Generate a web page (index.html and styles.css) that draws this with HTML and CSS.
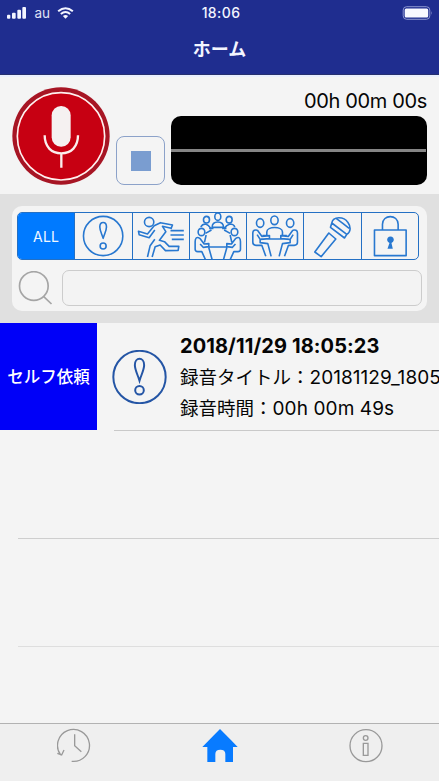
FILE: index.html
```html
<!DOCTYPE html>
<html lang="ja">
<head>
<meta charset="utf-8">
<meta name="viewport" content="width=device-width">
<title>ホーム</title>
<link rel="stylesheet" href="styles.css">
</head>
<body>
<div class="app">
  <header class="header">
    <div class="status">
      <div class="carrier">
        <svg class="signal" viewBox="0 0 57 36"><rect x="0" y="23" width="10" height="12" rx="3"/><rect x="15" y="17" width="11" height="18" rx="3"/><rect x="31" y="8" width="11" height="27" rx="3"/><rect x="46" y="0" width="11" height="35" rx="3"/></svg>
        <span class="carrier-name">au</span>
        <svg class="wifi" viewBox="0 0 50 36"><path d="M3 13Q25-6 47 13M11 21Q25 9 39 21" fill="none" stroke="#f3f5ff" stroke-width="6"/><path d="M25 35l-8-8q8-6 16 0z"/></svg>
      </div>
      <time class="clock">18:06</time>
      <svg class="battery" viewBox="0 0 30 14"><rect x=".7" y=".7" width="26.6" height="12.6" rx="3.4"/><rect class="charge" x="2.2" y="2.4" width="23.5" height="9.2" rx="1.5"/><path class="charge-tip" d="M28.8 5q1.4 2 0 4z"/></svg>
    </div>
    <h1 class="title">ホーム</h1>
  </header>

  <section class="recorder">
    <svg class="record" viewBox="35 35 294 294">
      <circle cx="182" cy="182" r="146" fill="#a71524"/>
      <circle cx="182" cy="183" r="131" fill="#c70012" stroke="#fff0ef" stroke-width="5"/>
      <rect x="154" y="92" width="57" height="122" rx="28" fill="#f5f1f1"/>
      <path d="M133 180c0 34 20 54 50 54s50-20 50-54M183 234v43" fill="none" stroke="#fbeeee" stroke-width="7"/>
    </svg>
    <div class="stop"><span class="stop-mark"></span></div>
    <div class="monitor">
      <div class="timer">00h 00m 00s</div>
      <div class="wave"><div class="wave-line"></div></div>
    </div>
  </section>

  <section class="filter">
    <div class="panel">
      <div class="segments">
        <div class="segment active">ALL</div>
        <div class="segment"><svg viewBox="226 54 168 138"><circle cx="310" cy="123" r="59"/><path d="M310 130c-4-13-10-23-10-34 0-18 20-18 20 0 0 11-6 21-10 34z"/><circle cx="310" cy="153" r="9"/></svg></div>
        <div class="segment"><svg viewBox="9 9 168 138"><circle cx="57" cy="36" r="14"/><path d="M74 60L57 83 27 74 25 64 52 72 72 47 91 38 127 45 123 55 97 49 107 65 88 91 103 95 117 109H146L144 121 106 122 90 105 75 110 66 141M52 141L60 107 74 88M121 62h40M121 75h40M125 88h36"/></svg></div>
        <div class="segment"><svg viewBox="14 24 168 138"><g><ellipse cx="97" cy="35" rx="9" ry="11"/><ellipse cx="63" cy="44" rx="9" ry="10"/><ellipse cx="131" cy="44" rx="9" ry="10"/><ellipse cx="48" cy="81" rx="10" ry="11"/><ellipse cx="147" cy="81" rx="10" ry="11"/><path d="M46 66q4-9 15-9l8 5 7 8M148 66q-3-9-15-9l-9 5-8 8M80 67q0-16 17-16t17 16zM71 70h13M110 70h13M78 75l-18 10M116 75l18 10M57 126h81M43 100c-10-6-14 0-14 10v23q0 7 8 7h12l11 24M43 100l13 17 14-1v9l-17 2-9-10M70 128l10 36M151 100c10-6 14 0 14 10v23q0 7-8 7h-12l-11 24M151 100l-13 17-14-1v9l17 2 9-10M124 128l-10 36M62 90l-5 22M134 90l5 22"/></g></svg></div>
        <div class="segment"><svg viewBox="82 54 168 138"><ellipse cx="121" cy="84" rx="11" ry="13"/><ellipse cx="164" cy="76" rx="11" ry="13"/><ellipse cx="211" cy="84" rx="11" ry="13"/><path d="M141 122v-11c0-18 47-18 47 0v11M141 122h-13M188 122h13M124 132h82M113 106c-7-3-14 0-14 8v28q0 9 10 9h17l12 33M113 106l13 18 23-2v9l-28 2-9-14M121 133v10l23 3 10 38M219 106c7-3 14 0 14 8v28q0 9-10 9h-17l-12 33M219 106l-13 18-23-2v9l28 2 9-14M211 133v10l-23 3-10 38"/></svg></div>
        <div class="segment"><svg viewBox="254 54 168 138"><path d="M337 84c4-21 36-20 48-2 10 14 9 29-3 36zM337 84l-4 13 42 32 7-11M351 71q19 14 38 29M328 114l21 18-44 53-19-14z"/></svg></div>
        <div class="segment"><svg viewBox="427 54 168 138"><path d="M464 105h95v77h-95zM488 105V88c0-31 47-31 47 0v17"/><path class="keyhole" d="M503 161l6-17a10 10 0 1 1 6 0l4 17z"/></svg></div>
      </div>
      <div class="search">
        <svg class="search-icon" viewBox="0 0 104 102"><circle cx="47" cy="45" r="43"/><path d="M76 76l24 23"/></svg>
        <input class="search-box" type="text">
      </div>
    </div>
  </section>

  <main class="list">
    <article class="item">
      <div class="tag">セルフ依頼</div>
      <div class="item-body">
        <svg class="item-icon" viewBox="0 0 166 162"><circle cx="83" cy="81" r="79"/><path d="M83 92c-5-17-14-32-14-47 0-25 28-25 28 0 0 15-9 30-14 47z"/><circle cx="83" cy="121" r="13"/></svg>
        <div class="details">
          <div class="date">2018/11/29 18:05:23</div>
          <div class="line name">録音タイトル：<span class="digits">20181129_1805</span></div>
          <div class="line">録音時間：<span class="duration">00h 00m 49s</span></div>
        </div>
      </div>
    </article>
    <div class="empty"></div>
    <div class="empty second"></div>
  </main>

  <nav class="tabs">
    <div class="tab"><svg class="tab-icon" viewBox="170 84 108 108"><path d="M181 165A48 48 0 1 1 214 184M171 160l13 5 7-15M223 103v34l20 18"/></svg></div>
    <div class="tab"><svg class="tab-icon home" viewBox="3 0 108 108"><path d="M54 3L89 38 107 57H93v45H70V78q0-13-15-13T40 78v24H16V57H1L34 23z"/></svg></div>
    <div class="tab"><svg class="tab-icon" viewBox="385 84 108 108"><circle cx="439" cy="137" r="48"/><circle cx="438" cy="114" r="7"/><path d="M431 130h14v36h-14z"/></svg></div>
  </nav>
</div>
</body>
</html>
```
FILE: styles.css
```css
* { box-sizing: border-box; }
body { margin: 0; background: #f4f4f4; color: #050505; font-family: Inter, "Noto Sans CJK JP", sans-serif; }
svg { display: block; }
.app { width: 439px; height: 781px; display: flex; flex-direction: column; overflow: hidden; }

.header { height: 75px; background: #1f2d8f; color: #f3f5ff; border-bottom: 1px solid #26306f; flex: none; }
.status { height: 25px; display: grid; grid-template-columns: 1fr auto 1fr; align-items: center; padding: 0 6px 0 7px; }
.carrier { display: flex; align-items: center; }
.signal { width: 19px; height: 12px; fill: #f3f5ff; }
.carrier-name { font-size: 13.5px; margin: 0 7px 0 8.5px; line-height: 24px; opacity: .9; }
.wifi { width: 17px; height: 12px; fill: #f3f5ff; }
.clock { font-size: 14px; font-weight: 500; letter-spacing: .4px; padding-left: 2px; }
.battery { width: 31px; height: 14px; justify-self: end; fill: none; stroke: #8c95cf; }
.battery .charge { fill: #f8f9ff; stroke: none; }
.battery .charge-tip { fill: #8c95cf; stroke: none; }
.title { margin: 0; text-align: center; font-size: 18px; line-height: 49px; font-weight: 700; }

.recorder { height: 119px; flex: none; display: flex; align-items: flex-end; padding: 0 12px 9px; border-top: 2px solid #e9effe; }
.record { width: 98px; height: 98px; }
.stop { width: 49px; height: 49px; margin: 0 6px; border: 1px solid #8ca2c9; border-radius: 8px; display: flex; align-items: center; justify-content: center; }
.stop-mark { width: 20px; height: 20px; background: #7a9dd0; }
.monitor { flex: 1; }
.timer { text-align: right; font-size: 20px; line-height: 30px; white-space: nowrap; letter-spacing: -.35px; }
.wave { height: 69px; background: #000; border-radius: 10px; display: flex; align-items: center; }
.wave-line { height: 3px; width: 255px; background: #858585; }

.filter { height: 129px; flex: none; background: #e0e0e0; padding: 12px 12px 12px; }
.panel { height: 105px; background: #f4f4f4; border-radius: 10px; padding: 6px 5px 0; }
.segments { width: 402px; height: 48px; border: 1px solid #2470c4; border-radius: 5px; display: flex; overflow: hidden; }
.segment { flex: 1 1 0; min-width: 0; border-left: 1px solid #2470c4; }
.segment svg { width: 100%; height: 46px; fill: none; stroke: #2878d0; stroke-width: 4.8; stroke-linejoin: round; }
.segment .keyhole { fill: #2878d0; stroke: none; }
.segment.active { background: #007aff; color: #f1f7ff; border-left: 0; font-size: 14px; line-height: 47px; text-align: center; letter-spacing: .2px; }
.search { display: flex; align-items: flex-start; padding-top: 10px; }
.search-icon { width: 35px; height: 34px; margin: 1px 10px 0 1px; fill: none; stroke: #a5a5a5; stroke-width: 5; }
.search-box { width: 360px; height: 36px; margin: 0 0 0 -1px; background: #f3f3f3; border: 1px solid #ccc; border-radius: 7px; padding: 0 8px; }

.list { flex: 1; min-height: 0; }
.item { display: flex; height: 108px; }
.tag { width: 97px; height: 107px; flex: none; background: #0000f8; color: #fff; font-size: 16.5px; line-height: 109px; text-align: center; font-weight: 500; white-space: nowrap; }
.item-body { flex: 1; min-width: 0; margin-left: 17px; border-bottom: 1px solid #c9c9c9; display: flex; }
.item-icon { width: 55px; height: 54px; flex: none; margin: 27px 13px 0 -2px; fill: none; stroke: #2455a5; stroke-width: 6; }
.details { min-width: 0; flex: 1; overflow: hidden; padding-top: 7px; white-space: nowrap; }
.date { font-size: 20px; line-height: 32px; font-weight: 650; letter-spacing: .1px; }
.line { font-size: 18.5px; line-height: 31px; }
.digits { font-size: 19px; letter-spacing: .05px; }
.duration { font-size: 19px; letter-spacing: .1px; }
.empty { height: 108px; margin-left: 18px; border-bottom: 1px solid #cecece; }
.second { border-bottom-color: #dedede; }

.tabs { height: 58px; flex: none; background: #efefef; border-top: 1px solid #b2b2b2; display: flex; justify-content: space-between; padding: 4px 55px 0 57px; }
.tab-icon { width: 36px; height: 36px; fill: none; stroke: #999; stroke-width: 4; }
.tab-icon.home { fill: #087bff; stroke: none; overflow: visible; }
```
